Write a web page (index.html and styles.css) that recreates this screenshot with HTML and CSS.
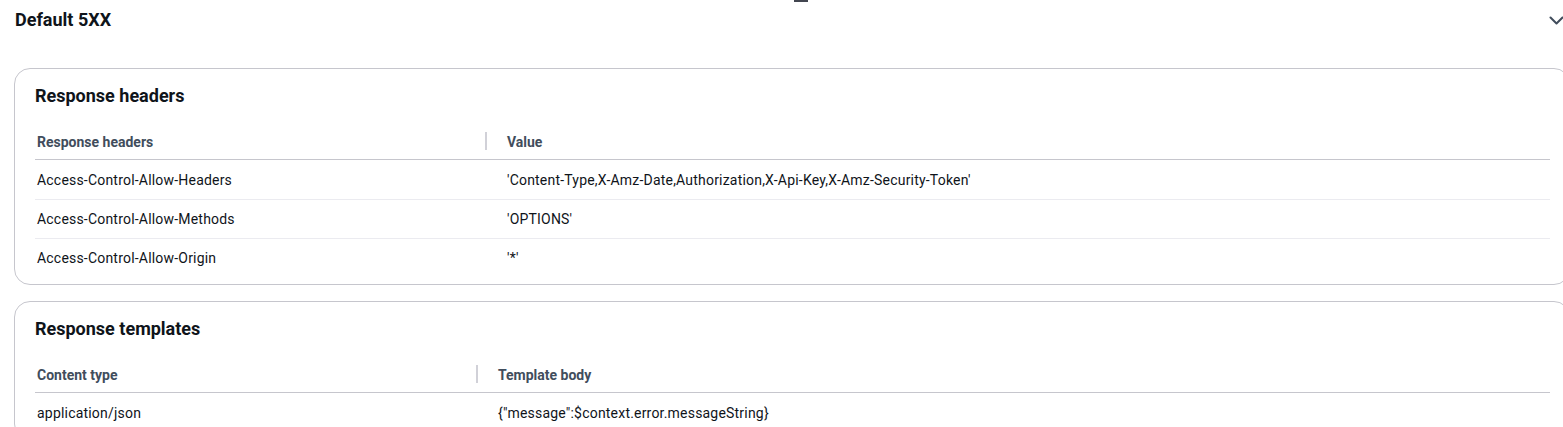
FILE: index.html
```html
<!DOCTYPE html>
<html lang="en">
<head>
<meta charset="utf-8">
<title>Default 5XX</title>
<link rel="stylesheet" href="styles.css">
</head>
<body>
<div class="top-mark"></div>
<div class="section-head">
  <h2 class="section-title">Default 5XX</h2>
  <svg class="chevron" width="16" height="16" viewBox="0 0 16 16" aria-hidden="true">
    <path d="M3.5 5.5L9.5 11.5L15.5 5.5" fill="none" stroke="#414d5c" stroke-width="2" stroke-linejoin="round" stroke-linecap="round"/>
  </svg>
</div>
<div class="cards">
  <section class="card">
    <h3 class="card-title">Response headers</h3>
    <table class="tbl tbl-headers">
      <thead>
        <tr><th class="c1">Response headers</th><th class="c2">Value</th></tr>
      </thead>
      <tbody>
        <tr><td class="c1">Access-Control-Allow-Headers</td><td class="c2">'Content-Type,X-Amz-Date,Authorization,X-Api-Key,X-Amz-Security-Token'</td></tr>
        <tr><td class="c1">Access-Control-Allow-Methods</td><td class="c2">'OPTIONS'</td></tr>
        <tr><td class="c1">Access-Control-Allow-Origin</td><td class="c2">'*'</td></tr>
      </tbody>
    </table>
  </section>
  <section class="card">
    <h3 class="card-title">Response templates</h3>
    <table class="tbl tbl-templates">
      <thead>
        <tr><th class="c1">Content type</th><th class="c2">Template body</th></tr>
      </thead>
      <tbody>
        <tr><td class="c1">application/json</td><td class="c2">{"message":$context.error.messageString}</td></tr>
      </tbody>
    </table>
  </section>
</div>
</body>
</html>
```
FILE: styles.css
```css
html, body {
  margin: 0;
  padding: 0;
  background: #ffffff;
  overflow: hidden;
}
body {
  font-family: Roboto, "Open Sans", "Liberation Sans", sans-serif;
  font-size: 14px;
  line-height: 20px;
  color: #0f141a;
  width: 1563px;
  height: 427px;
  position: relative;
}
.top-mark {
  position: absolute;
  left: 794px;
  top: 0;
  width: 14px;
  height: 2px;
  background: #424650;
}
.section-head {
  display: flex;
  align-items: center;
  justify-content: space-between;
  padding: 9px 0 0 15px;
  height: 22px;
}
.section-title {
  margin: 0;
  font-size: 18px;
  line-height: 22px;
  font-weight: 700;
  color: #0f141a;
}
.chevron {
  display: block;
}
.cards {
  display: flex;
  flex-direction: column;
  gap: 16px;
  padding: 37px 0 0 14px;
}
.card {
  flex-shrink: 0;
  box-sizing: content-box;
  width: 1515px;
  border: 1px solid #c6c6cd;
  border-radius: 16px;
  padding: 16px 19px 7px 20px;
}
.card-title {
  margin: 0 0 17px 0;
  font-size: 18px;
  line-height: 22px;
  font-weight: 700;
  color: #0f141a;
}
.tbl {
  width: 1515px;
  border-collapse: collapse;
  table-layout: fixed;
}
.tbl-headers .c1 { width: 450px; }
.tbl-templates .c1 { width: 441px; }
.tbl th {
  text-align: left;
  font-weight: 700;
  color: #414d5c;
  padding: 8px 0 7px 0;
  border-bottom: 1px solid #c6c6cd;
  position: relative;
}
.tbl th.c1 { padding-left: 2px; }
.tbl th.c2 { padding-left: 20px; }
.tbl th.c1::after {
  content: "";
  position: absolute;
  right: 0;
  top: 8px;
  width: 2px;
  height: 18px;
  background: #d1d1d8;
}
.tbl td {
  padding: 9px 0 9px 0;
  border-bottom: 1px solid #ebebf0;
  color: #0f141a;
  white-space: nowrap;
  letter-spacing: 0.2px;
}
.tbl tbody tr:first-child td { padding-top: 10px; }
.tbl td.c1 { padding-left: 2px; }
.tbl td.c2 { padding-left: 20px; }
.tbl tbody tr:last-child td { border-bottom: none; }
```
